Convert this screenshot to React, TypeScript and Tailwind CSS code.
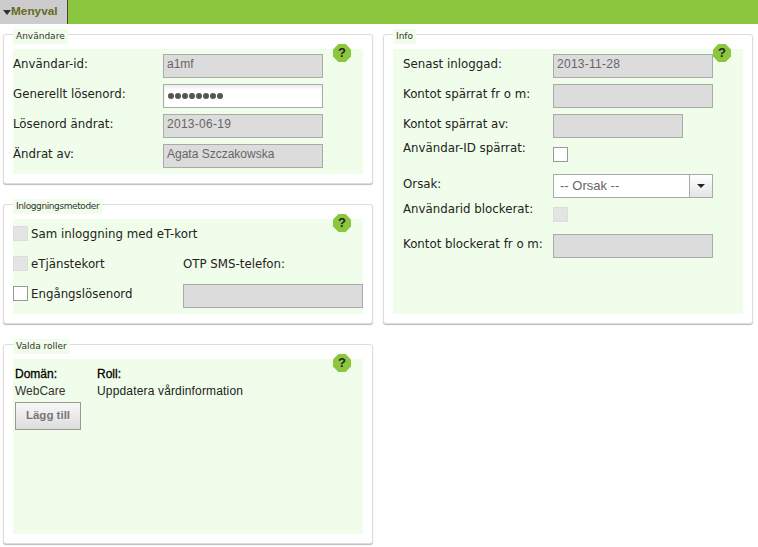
import React from 'react';

const labelFont = "font-['DejaVu_Sans',sans-serif] text-[11.8px] text-[#222]";
const arial = "font-['Liberation_Sans',Arial,sans-serif]";

const HelpIcon: React.FC<{ className: string }> = ({ className }) => (
  <span className={`absolute top-[9px] flex h-[18px] w-[18px] items-center justify-center bg-[#8cc63f] text-[13px] font-bold text-[#222] [clip-path:polygon(30%_0,70%_0,100%_30%,100%_70%,70%_100%,30%_100%,0_70%,0_30%)] ${arial} ${className}`}>
    ?
  </span>
);

interface PanelProps {
  legend: string;
  legendClass?: string;
  className: string;
  children: React.ReactNode;
}

const Panel: React.FC<PanelProps> = ({ legend, legendClass = '', className, children }) => (
  <section className={`relative rounded-[3px] border border-[#ddd] bg-white px-[9px] pb-[9px] pt-[14px] shadow-[0_1px_1px_#bbb] ${className}`}>
    <span className={`absolute left-[9px] top-[-6px] bg-[#f0fdea] px-[3px] py-[1px] font-['DejaVu_Sans',sans-serif] text-[9px] leading-[13px] text-[#333] ${legendClass}`}>
      {legend}
    </span>
    <HelpIcon className="left-[329px]" />
    <div className="h-full bg-[#f0fdea]">{children}</div>
  </section>
);

const Field: React.FC<{ value?: string; className?: string }> = ({ value = '', className = 'w-[160px]' }) => (
  <div className={`h-[24px] border border-[#aaa] bg-[#dcdcdc] pl-[3px] text-[12px] leading-[18px] text-[#666] ${arial} ${className}`}>
    {value}
  </div>
);

const Checkbox: React.FC<{ disabled?: boolean }> = ({ disabled }) => (
  <span className={`block h-[15px] w-[15px] shrink-0 border ${disabled ? 'border-[#ddd] bg-[#e4e4e4]' : 'border-[#999] bg-white'}`} />
);

const Row: React.FC<{ label: string; leading?: string; className?: string; children: React.ReactNode }> = ({
  label,
  leading = 'leading-[20px]',
  className = 'mb-[6px]',
  children,
}) => (
  <div className={`flex items-start ${className}`}>
    <span className={`w-[150px] ${labelFont} ${leading}`}>{label}</span>
    {children}
  </div>
);

export default function App() {
  return (
    <div className="h-[547px] w-[758px] overflow-hidden bg-white">
      <header className="flex h-[24px] bg-[#8cc63f]">
        <div className={`flex w-[68px] items-center border-r border-[#444] bg-[#ccc] pl-[3px] text-[11.8px] font-bold text-[#666a1e] ${arial}`}>
          <span className="h-0 w-0 border-x-[4px] border-t-[5px] border-x-transparent border-t-[#333]" />
          Menyval
        </div>
      </header>

      <main className="grid grid-cols-[370px_370px] gap-x-[10px] pl-[3px] pt-[10px]">
        <div className="flex flex-col gap-[20px]">
          <Panel legend="Användare" className="h-[150px]">
            <div className="pt-[5px]">
              <Row label="Användar-id:"><Field value="a1mf" /></Row>
              <Row label="Generellt lösenord:">
                <div className="flex h-[24px] w-[160px] items-center gap-[1px] border border-[#aaa] bg-white pl-[4px] shadow-[inset_0_3px_3px_#eee]">
                  {[0, 1, 2, 3, 4, 5, 6, 7].map((i) => (
                    <span key={i} className="h-[6px] w-[6px] rounded-full bg-[#555]" />
                  ))}
                </div>
              </Row>
              <Row label="Lösenord ändrat:"><Field value="2013-06-19" className="w-[160px] tracking-[0.27px]" /></Row>
              <Row label="Ändrat av:" className=""><Field value="Agata Szczakowska" /></Row>
            </div>
          </Panel>

          <Panel legend="Inloggningsmetoder" legendClass="tracking-[-0.4px]" className="h-[120px]">
            <div className="pt-[7px]">
              <div className="flex h-[15px] items-start gap-[3px]">
                <Checkbox disabled />
                <span className={`${labelFont} leading-[17px]`}>Sam inloggning med eT-kort</span>
              </div>
              <div className="mt-[15px] flex h-[15px] items-start gap-[3px]">
                <Checkbox disabled />
                <span className={`${labelFont} w-[149px] leading-[17px]`}>eTjänstekort</span>
                <span className={`${labelFont} leading-[17px]`}>OTP SMS-telefon:</span>
              </div>
              <div className="mt-[13px] flex h-[24px] items-start gap-[3px]">
                <span className="mt-[2px]"><Checkbox /></span>
                <span className={`${labelFont} mt-[2px] w-[149px] leading-[17px]`}>Engångslösenord</span>
                <Field className="w-[180px]" />
              </div>
            </div>
          </Panel>

          <Panel legend="Valda roller" className="h-[200px]">
            <div className={`grid grid-cols-[82px_1fr] pl-[2px] pt-[7px] text-[12px] leading-[16px] ${arial}`}>
              <span className="text-black [-webkit-text-stroke:0.3px_black]">Domän:</span>
              <span className="text-black [-webkit-text-stroke:0.3px_black]">Roll:</span>
              <span className="mt-[1px] text-[#333]">WebCare</span>
              <span className="mt-[1px] tracking-[0.16px] text-[#222]">Uppdatera vårdinformation</span>
            </div>
            <button className={`ml-[2px] mt-[3px] h-[28px] w-[66px] border border-[#999] bg-gradient-to-b from-[#f8f8f8] to-[#ddd] text-[11.5px] font-bold text-[#777] ${arial}`}>
              Lägg till
            </button>
          </Panel>
        </div>

        <Panel legend="Info" className="h-[290px]">
          <div className="pl-[10px] pt-[5px]">
            <Row label="Senast inloggad:"><Field value="2013-11-28" className="w-[160px] tracking-[0.27px]" /></Row>
            <Row label="Kontot spärrat fr o m:"><Field /></Row>
            <Row label="Kontot spärrat av:" className=""><Field className="w-[130px]" /></Row>
            <div className="flex h-[36px] items-start">
              <span className={`${labelFont} w-[150px] leading-[20px]`}>Användar-ID spärrat:</span>
              <span className="mt-[9px]"><Checkbox /></span>
            </div>
            <Row label="Orsak:" className="">
              <div className={`flex h-[24px] w-[160px] border border-[#aaa] bg-white text-[13px] text-[#666] ${arial}`}>
                <span className="flex-1 pl-[6px] leading-[22px]">-- Orsak --</span>
                <span className="flex w-[23px] items-center justify-center border-l border-[#aaa] bg-gradient-to-b from-white to-[#e4e4e4]">
                  <span className="h-0 w-0 border-x-[4px] border-t-[4px] border-x-transparent border-t-[#222]" />
                </span>
              </div>
            </Row>
            <div className="flex h-[36px] items-start">
              <span className={`${labelFont} w-[150px] leading-[22px]`}>Användarid blockerat:</span>
              <span className="mt-[9px]"><Checkbox disabled /></span>
            </div>
            <Row label="Kontot blockerat fr o m:"><Field /></Row>
          </div>
        </Panel>
      </main>
    </div>
  );
}
